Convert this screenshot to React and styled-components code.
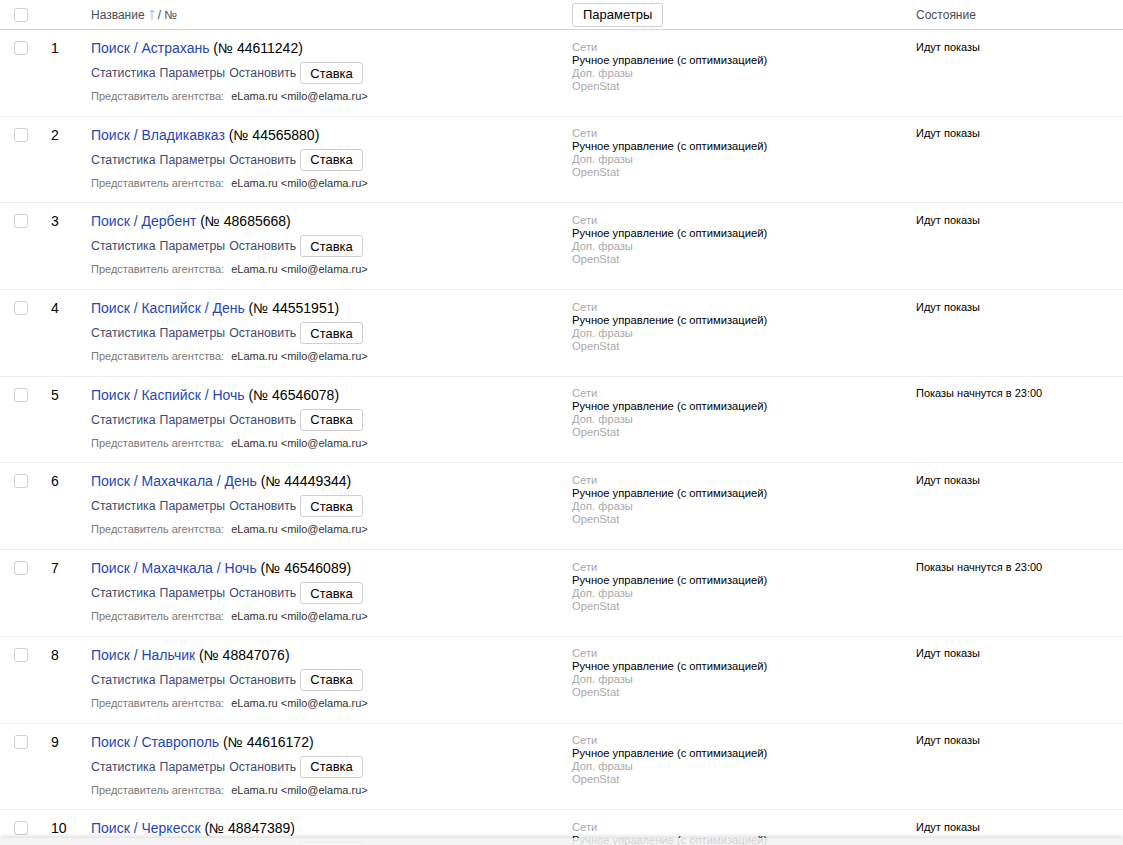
import React from "react";
import styled, { createGlobalStyle } from "styled-components";

const GlobalStyle = createGlobalStyle`
  html, body {
    margin: 0;
    padding: 0;
    background: #fff;
    overflow: hidden;
  }
  body {
    font-family: "Liberation Sans", Arial, sans-serif;
    color: #000;
  }
`;

const campaigns = [
  { name: "Поиск / Астрахань", id: "44611242", state: "Идут показы" },
  { name: "Поиск / Владикавказ", id: "44565880", state: "Идут показы" },
  { name: "Поиск / Дербент", id: "48685668", state: "Идут показы" },
  { name: "Поиск / Каспийск / День", id: "44551951", state: "Идут показы" },
  { name: "Поиск / Каспийск / Ночь", id: "46546078", state: "Показы начнутся в 23:00" },
  { name: "Поиск / Махачкала / День", id: "44449344", state: "Идут показы" },
  { name: "Поиск / Махачкала / Ночь", id: "46546089", state: "Показы начнутся в 23:00" },
  { name: "Поиск / Нальчик", id: "48847076", state: "Идут показы" },
  { name: "Поиск / Ставрополь", id: "44616172", state: "Идут показы" },
  { name: "Поиск / Черкесск", id: "48847389", state: "Идут показы" },
];

const Page = styled.div`
  height: 100vh;
  overflow: hidden;
`;

const Grid = styled.div`
  display: grid;
  grid-template-columns: 37px 40px 481px 344px 1fr;
`;

const HeaderRow = styled(Grid)`
  height: 29px;
  padding-left: 14px;
  align-items: center;
  border-bottom: 1px solid #d6d3dc;
  font-size: 12px;
  color: #4b4b5a;
`;

const Row = styled(Grid)`
  align-items: start;
  padding: 9px 0 12.7px 14px;
  border-bottom: 1px solid #ececef;
`;

const Check = styled.span`
  display: block;
  width: 12px;
  height: 12px;
  border: 1px solid #cfcfd4;
  border-radius: 3px;
  background: #fff;
  margin-top: ${(p) => (p.$top ? p.$top : 0)}px;
`;

const Num = styled.div`
  font-size: 14px;
  line-height: 18px;
`;

const SortArrow = styled.svg`
  margin: 0 3px 0 4px;
`;

const Button = styled.button`
  font-family: inherit;
  font-size: 13px;
  color: #000;
  background: #fff;
  border: 1px solid #cfcfd4;
  border-radius: 3px;
  height: ${(p) => p.$h}px;
  padding: 0 ${(p) => p.$px}px;
  cursor: pointer;
`;

const HeaderCell = styled.div`
  display: flex;
  align-items: center;
`;

const Title = styled.div`
  font-size: 14px;
  line-height: 18px;
`;

const TitleLink = styled.a`
  color: #2546b5;
  text-decoration: none;
`;

const Actions = styled.div`
  display: flex;
  align-items: center;
  gap: 4px;
  margin-top: 5px;
  font-size: 12.3px;
`;

const Action = styled.a`
  color: #3d4a74;
  text-decoration: none;
`;

const Agent = styled.div`
  margin-top: 5px;
  font-size: 11px;
  line-height: 14px;
  color: #7a7a7a;

  b {
    font-weight: normal;
    color: #333;
    margin-left: 4px;
  }
`;

const Params = styled.div`
  padding-top: 1.5px;
  font-size: 11.2px;
  line-height: 13px;
`;

const ParamLine = styled.div`
  color: ${(p) => (p.$dim ? "#a9a9a9" : "#000")};
`;

const State = styled.div`
  padding-top: 1.5px;
  font-size: 11px;
  line-height: 13px;
`;

const BottomBar = styled.div`
  position: fixed;
  left: 0;
  right: 0;
  bottom: 0;
  height: 7px;
  background: rgba(242, 242, 242, 0.85);
  box-shadow: 0 -2px 4px rgba(0, 0, 0, 0.12);
`;

export default function App() {
  return (
    <Page>
      <GlobalStyle />
      <HeaderRow>
        <Check />
        <span />
        <HeaderCell>
          Название
          <SortArrow width="6" height="11" viewBox="0 0 6 11">
            <path
              d="M3 10.5V1M0.8 3.4L3 1l2.2 2.4"
              fill="none"
              stroke="#8fb3d6"
              strokeWidth="1"
            />
          </SortArrow>
          / №
        </HeaderCell>
        <HeaderCell>
          <Button $h={24} $px={10}>Параметры</Button>
        </HeaderCell>
        <HeaderCell>Состояние</HeaderCell>
      </HeaderRow>

      {campaigns.map((c, i) => (
        <Row key={c.id}>
          <Check $top={2} />
          <Num>{i + 1}</Num>
          <div>
            <Title>
              <TitleLink href="#">{c.name}</TitleLink> (№ {c.id})
            </Title>
            <Actions>
              <Action href="#">Статистика</Action>
              <Action href="#">Параметры</Action>
              <Action href="#">Остановить</Action>
              <Button $h={22} $px={9}>Ставка</Button>
            </Actions>
            <Agent>
              Представитель агентства: <b>eLama.ru &lt;milo@elama.ru&gt;</b>
            </Agent>
          </div>
          <Params>
            <ParamLine $dim>Сети</ParamLine>
            <ParamLine>Ручное управление (с оптимизацией)</ParamLine>
            <ParamLine $dim>Доп. фразы</ParamLine>
            <ParamLine $dim>OpenStat</ParamLine>
          </Params>
          <State>{c.state}</State>
        </Row>
      ))}
      <BottomBar />
    </Page>
  );
}
